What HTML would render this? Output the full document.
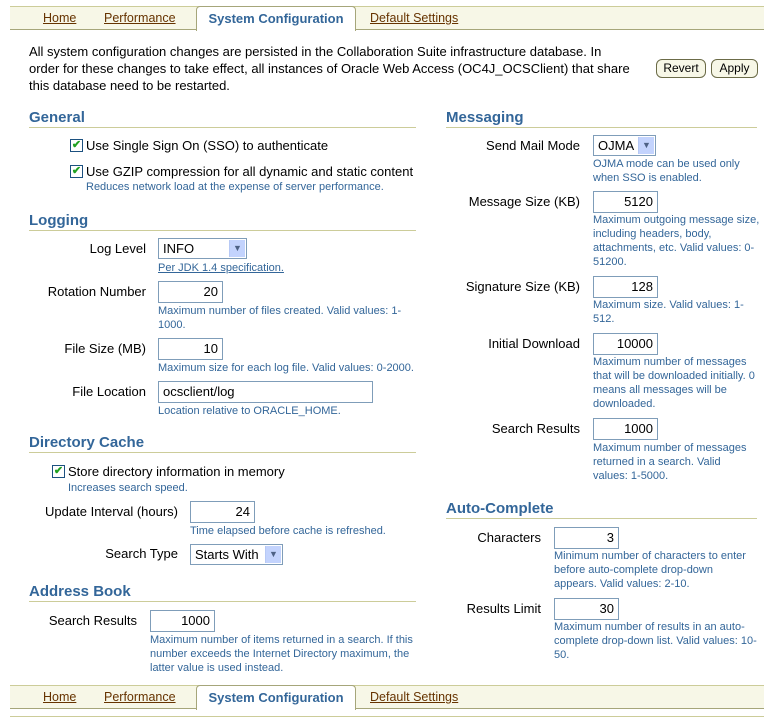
<!DOCTYPE html>
<html><head><style>
body{margin:0;width:764px;height:723px;position:relative;background:#fff;font-family:"Liberation Sans",sans-serif;overflow:hidden}
div,span{position:absolute}
.t{font-size:13px;color:#000;white-space:nowrap;line-height:14px}
.l{font-size:13px;color:#000;white-space:nowrap;line-height:14px;text-align:right}
.h{font-size:11px;color:#336699;line-height:14px}
.hd{font-size:15px;font-weight:bold;color:#336699;line-height:16px}
.ul{height:1px;background:#cccc99}
.in{border:1px solid #7f9db9;box-sizing:border-box;height:22px;font-size:13px;line-height:20px;text-align:right;padding-right:4px;background:#fff}
.sel{border:1px solid #7f9db9;box-sizing:border-box;height:21px;font-size:13px;line-height:19px;padding-left:4px;background:#fff}
.arr{position:absolute;right:1px;top:1px;width:15px;height:17px;background:#c3d3fd;border-left:1px solid #b7c9f5;color:#4d6185;font-size:9px;text-align:center;line-height:17px}
.cb{width:11px;height:11px;border:1px solid #1c5180;background:#fff;color:#21a121;font-size:11px;line-height:11px;text-align:center;font-weight:bold}
.tabbar{left:10px;width:754px;height:22px;background:#f7f7e7;border-top:1px solid #cccc99;border-bottom:1px solid #a6a67a}
.tab{font-size:12.5px;color:#663300;text-decoration:underline;top:4px;line-height:14px}
.act{left:186px;top:-1px;width:158px;height:24px;background:#fff;border:1px solid #a6a67a;border-bottom:none;border-radius:4px 4px 0 0;font-size:13px;font-weight:bold;color:#336699;text-align:center;line-height:24px}
.btn{border:1px solid #6b6b47;border-radius:6px;background:#f7f7e7;font-size:12px;line-height:16px;text-align:center;height:17px}
</style></head><body>

<div class="tabbar" style="top:6px">
<span class="tab" style="left:33px">Home</span>
<span class="tab" style="left:94px">Performance</span>
<div class="act">System Configuration</div>
<span class="tab" style="left:360px">Default Settings</span>
</div>

<div class="t" style="left:29px;top:43px;line-height:17px;font-size:13px">All system configuration changes are persisted in the Collaboration Suite infrastructure database. In<br>order for these changes to take effect, all instances of Oracle Web Access (OC4J_OCSClient) that share<br>this database need to be restarted.</div>
<div class="btn" style="left:656px;top:59px;width:48px">Revert</div>
<div class="btn" style="left:711px;top:59px;width:45px">Apply</div>

<div class="hd" style="left:29px;top:110px">General</div>
<div class="ul" style="left:29px;top:127px;width:387px"></div>
<div class="cb" style="left:70px;top:139px">✔</div>
<div class="t" style="left:86px;top:139px">Use Single Sign On (SSO) to authenticate</div>
<div class="cb" style="left:70px;top:165px">✔</div>
<div class="t" style="left:86px;top:165px">Use GZIP compression for all dynamic and static content</div>
<div class="h" style="left:86px;top:180px;white-space:nowrap">Reduces network load at the expense of server performance.</div>

<div class="hd" style="left:29px;top:213px">Logging</div>
<div class="ul" style="left:29px;top:230px;width:387px"></div>
<div class="l" style="right:618px;top:242px">Log Level</div>
<div class="sel" style="left:158px;top:238px;width:89px">INFO<span class="arr">▼</span></div>
<div class="h" style="left:158px;top:261px;text-decoration:underline">Per JDK 1.4 specification.</div>
<div class="l" style="right:618px;top:285px">Rotation Number</div>
<div class="in" style="left:158px;top:281px;width:65px">20</div>
<div class="h" style="left:158px;top:304px;width:250px">Maximum number of files created. Valid values: 1-1000.</div>
<div class="l" style="right:618px;top:342px">File Size (MB)</div>
<div class="in" style="left:158px;top:338px;width:65px">10</div>
<div class="h" style="left:158px;top:361px;white-space:nowrap">Maximum size for each log file. Valid values: 0-2000.</div>
<div class="l" style="right:618px;top:385px">File Location</div>
<div class="in" style="left:158px;top:381px;width:215px;text-align:left;padding-left:4px">ocsclient/log</div>
<div class="h" style="left:158px;top:404px;white-space:nowrap">Location relative to ORACLE_HOME.</div>

<div class="hd" style="left:29px;top:435px">Directory Cache</div>
<div class="ul" style="left:29px;top:452px;width:387px"></div>
<div class="cb" style="left:52px;top:465px">✔</div>
<div class="t" style="left:68px;top:465px">Store directory information in memory</div>
<div class="h" style="left:68px;top:481px;white-space:nowrap">Increases search speed.</div>
<div class="l" style="right:586px;top:505px">Update Interval (hours)</div>
<div class="in" style="left:190px;top:501px;width:65px">24</div>
<div class="h" style="left:190px;top:524px;white-space:nowrap">Time elapsed before cache is refreshed.</div>
<div class="l" style="right:586px;top:547px">Search Type</div>
<div class="sel" style="left:190px;top:544px;width:93px">Starts With<span class="arr">▼</span></div>

<div class="hd" style="left:29px;top:584px">Address Book</div>
<div class="ul" style="left:29px;top:601px;width:387px"></div>
<div class="l" style="right:627px;top:614px">Search Results</div>
<div class="in" style="left:150px;top:610px;width:65px">1000</div>
<div class="h" style="left:150px;top:633px;width:265px">Maximum number of items returned in a search. If this number exceeds the Internet Directory maximum, the latter value is used instead.</div>

<div class="hd" style="left:446px;top:110px">Messaging</div>
<div class="ul" style="left:446px;top:127px;width:311px"></div>
<div class="l" style="right:184px;top:139px">Send Mail Mode</div>
<div class="sel" style="left:593px;top:135px;width:63px">OJMA<span class="arr">▼</span></div>
<div class="h" style="left:593px;top:157px;width:170px">OJMA mode can be used only when SSO is enabled.</div>
<div class="l" style="right:184px;top:195px">Message Size (KB)</div>
<div class="in" style="left:593px;top:191px;width:65px">5120</div>
<div class="h" style="left:593px;top:213px;width:168px">Maximum outgoing message size, including headers, body, attachments, etc. Valid values: 0-51200.</div>
<div class="l" style="right:184px;top:280px">Signature Size (KB)</div>
<div class="in" style="left:593px;top:276px;width:65px">128</div>
<div class="h" style="left:593px;top:298px;width:160px">Maximum size. Valid values: 1-512.</div>
<div class="l" style="right:184px;top:337px">Initial Download</div>
<div class="in" style="left:593px;top:333px;width:65px">10000</div>
<div class="h" style="left:593px;top:355px;width:170px">Maximum number of messages that will be downloaded initially. 0 means all messages will be downloaded.</div>
<div class="l" style="right:184px;top:422px">Search Results</div>
<div class="in" style="left:593px;top:418px;width:65px">1000</div>
<div class="h" style="left:593px;top:441px;width:160px">Maximum number of messages returned in a search. Valid values: 1-5000.</div>

<div class="hd" style="left:446px;top:501px">Auto-Complete</div>
<div class="ul" style="left:446px;top:518px;width:311px"></div>
<div class="l" style="right:223px;top:531px">Characters</div>
<div class="in" style="left:554px;top:527px;width:65px">3</div>
<div class="h" style="left:554px;top:549px;width:192px">Minimum number of characters to enter before auto-complete drop-down appears. Valid values: 2-10.</div>
<div class="l" style="right:223px;top:602px">Results Limit</div>
<div class="in" style="left:554px;top:598px;width:65px">30</div>
<div class="h" style="left:554px;top:620px;width:208px">Maximum number of results in an auto-complete drop-down list. Valid values: 10-50.</div>

<div class="tabbar" style="top:685px">
<span class="tab" style="left:33px">Home</span>
<span class="tab" style="left:94px">Performance</span>
<div class="act">System Configuration</div>
<span class="tab" style="left:360px">Default Settings</span>
</div>
<div style="left:10px;top:716px;width:754px;height:1px;background:#cccc99"></div>
</body></html>
